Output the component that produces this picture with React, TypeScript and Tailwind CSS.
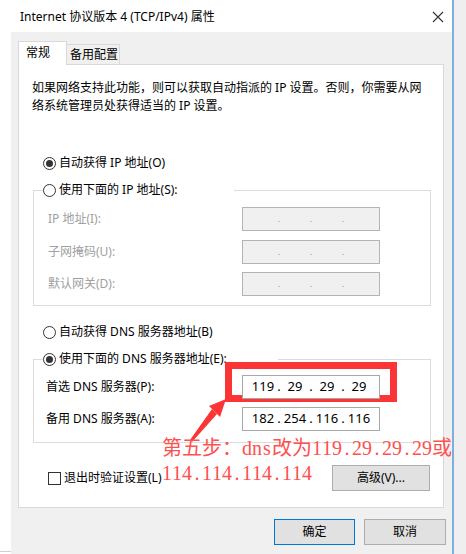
type IpProps = { values?: string[]; disabled?: boolean };

function IpBox({ values, disabled }: IpProps) {
  const segs = values ?? ["", "", "", ""];
  return (
    <div
      className={
        "flex h-[24px] w-[138px] items-center border pl-[7px] text-[13px] " +
        (disabled ? "border-[#b4b4b4] bg-[#f0f0f0] text-[#9a9a9a]" : "relative z-10 border-[#a8a8a8] bg-white text-black")
      }
    >
      {segs.map((v, i) => (
        <div key={i} className="flex items-center">
          <span className="w-[26px] text-center">{v}</span>
          {i < 3 && <span className={"w-[6px] text-center " + (disabled ? "text-[9px]" : "")}>.</span>}
        </div>
      ))}
    </div>
  );
}

function Radio({ checked }: { checked?: boolean }) {
  return (
    <span className="flex h-[13px] w-[13px] shrink-0 items-center justify-center rounded-full border border-[#333] bg-white">
      {checked && <span className="h-[7px] w-[7px] rounded-full bg-[#333]" />}
    </span>
  );
}

function Cells({ text }: { text: string }) {
  return (
    <>
      {text.split("").map((c, i) => (
        <span key={i} className="inline-block w-[10px] text-center">
          {c}
        </span>
      ))}
    </>
  );
}

function Row({ label, children, pad, dim }: { label: string; children: React.ReactNode; pad: string; dim?: boolean }) {
  return (
    <div className={"flex h-[24px] items-center " + pad}>
      <span className={"shrink-0 " + (dim ? "text-[#a0a0a0]" : "text-black") + (pad === "pl-[14px]" ? " w-[194px]" : " w-[196px]")}>
        {label}
      </span>
      {children}
    </div>
  );
}

export default function App() {
  return (
    <div className="relative flex h-[554px] w-[466px] overflow-hidden bg-white font-['Noto_Sans','Noto_Sans_CJK_SC',sans-serif] text-[12px] text-black">
      {/* left margin of the screenshot */}
      <div className="flex w-[11px] shrink-0 flex-col justify-end pb-[2px]">
        <div className="h-px bg-[#cfcfcf]" />
      </div>

      {/* dialog window */}
      <div className="flex w-[441px] shrink-0 flex-col">
        <div className="flex h-[32px] items-center justify-between bg-white pl-[9px] pr-[8px]">
          <span className="pt-[2px]">Internet 协议版本 4 (TCP/IPv4) 属性</span>
          <svg width="12" height="12" viewBox="0 0 12 12" className="mt-[1px]">
            <path d="M1 1 L11 11 M11 1 L1 11" stroke="#333" strokeWidth="1.1" fill="none" />
          </svg>
        </div>

        <div className="flex flex-1 flex-col bg-[#f0f0f0]">
          {/* tabs */}
          <div className="mt-[9px] flex h-[23px] items-end pl-[7px]">
            <div className="relative z-10 -mb-px flex h-[24px] w-[49px] items-center border border-b-0 border-[#d9d9d9] bg-white pb-[2px] pl-[7px]">
              常规
            </div>
            <div className="flex h-[20px] w-[53px] items-center border-t border-r border-[#d9d9d9] bg-[#f0f0f0] pl-[3px]">
              备用配置
            </div>
          </div>

          {/* panel */}
          <div className="mx-[7px] flex h-[444px] w-[426px] flex-col border border-[#d9d9d9] bg-white">
            <p className="ml-[13px] mt-[14px] whitespace-nowrap leading-[18px]">
              如果网络支持此功能，则可以获取自动指派的 IP 设置。否则，你需要从网
              <br />
              络系统管理员处获得适当的 IP 设置。
            </p>

            <div className="ml-[24px] mt-[40px] flex h-[16px] items-center gap-[3px]">
              <Radio checked />
              <span>自动获得 IP 地址(O)</span>
            </div>

            <fieldset className="ml-[14px] mt-[11px] w-[398px] border border-[#dcdcdc] pb-[9px]">
              <legend className="ml-[9px] w-[191px] leading-[16px]">
                <div className="flex h-[16px] items-center gap-[3px]">
                  <Radio />
                  <span>使用下面的 IP 地址(S):</span>
                </div>
              </legend>
              <div className="mt-[9px] flex flex-col gap-[8.5px]">
                <Row label="IP 地址(I):" pad="pl-[14px]" dim>
                  <IpBox disabled />
                </Row>
                <Row label="子网掩码(U):" pad="pl-[14px]" dim>
                  <IpBox disabled />
                </Row>
                <Row label="默认网关(D):" pad="pl-[14px]" dim>
                  <IpBox disabled />
                </Row>
              </div>
            </fieldset>

            <div className="ml-[24px] mt-[18px] flex h-[16px] items-center gap-[3px]">
              <Radio />
              <span>自动获得 DNS 服务器地址(B)</span>
            </div>

            <fieldset className="ml-[14px] mt-[11px] w-[398px] border border-[#dcdcdc] pb-[11px]">
              <legend className="ml-[9px] w-[235px] leading-[16px]">
                <div className="flex h-[16px] items-center gap-[3px]">
                  <Radio checked />
                  <span>使用下面的 DNS 服务器地址(E):</span>
                </div>
              </legend>
              <div className="mt-[8px] flex flex-col gap-[8px]">
                <Row label="首选 DNS 服务器(P):" pad="pl-[12px]">
                  <IpBox values={["119", "29", "29", "29"]} />
                </Row>
                <Row label="备用 DNS 服务器(A):" pad="pl-[12px]">
                  <IpBox values={["182", "254", "116", "116"]} />
                </Row>
              </div>
            </fieldset>

            <div className="mt-[22px] flex h-[26px] items-center pl-[29px] pr-[13px]">
              <span className="h-[13px] w-[13px] shrink-0 border border-[#333] bg-white" />
              <span className="ml-[3px]">退出时验证设置(L)</span>
              <button className="ml-auto h-[26px] w-[98px] border border-[#adadad] bg-[#e1e1e1]">高级(V)...</button>
            </div>
          </div>

          {/* dialog buttons */}
          <div className="mt-[11px] flex justify-end gap-[9px] pr-[6px]">
            <button className="h-[26px] w-[81px] border border-[#0078d7] bg-[#e1e1e1]">确定</button>
            <button className="h-[26px] w-[82px] border border-[#adadad] bg-[#e1e1e1]">取消</button>
          </div>
        </div>
      </div>

      {/* window edge */}
      <div className="w-[2px] shrink-0 bg-[#7fafe0]" />
      <div className="flex-1 bg-[#efefef]" />

      {/* red annotation drawn over the screenshot */}
      <div className="absolute left-[225px] top-[362px] z-0 h-[40px] w-[172px] border-[7px] border-[#fb3535]" />
      <svg className="pointer-events-none absolute left-0 top-0 z-20" width="466" height="554">
        <polygon points="226,399 209,406 220,417" fill="#fb3535" />
        <polygon points="212,409 217,414 192,442 190,440" fill="#fb3535" />
      </svg>
      <div className="pointer-events-none absolute left-[162px] top-[436px] z-20 whitespace-nowrap font-['Liberation_Serif','Noto_Sans_CJK_SC',serif] text-[20px] leading-[25px] text-[#ff5050]">
        <div>
          第五步：<Cells text="dns" />改为<Cells text="119.29.29.29" />或
        </div>
        <div>
          <Cells text="114.114.114.114" />
        </div>
      </div>
    </div>
  );
}
